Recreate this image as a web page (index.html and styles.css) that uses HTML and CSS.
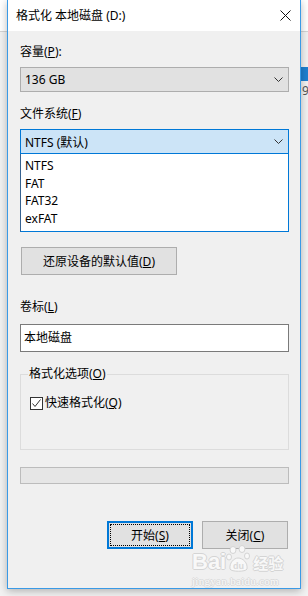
FILE: index.html
```html
<!DOCTYPE html>
<html lang="zh-CN">
<head>
    <meta charset="UTF-8">
    <meta name="viewport" content="width=device-width, initial-scale=1.0">
    <title>格式化 本地磁盘 (D:)</title>
    <link rel="stylesheet" href="styles.css">
</head>
<body>
    <div class="dialog">
        <div class="titlebar">
            <span class="title">格式化 本地磁盘 (D:)</span>
            <svg class="close" width="11" height="11" viewBox="0 0 11 11">
                <path d="M0.5 0.5 L10.5 10.5 M10.5 0.5 L0.5 10.5" stroke="#111" stroke-width="1" fill="none"/>
            </svg>
        </div>
        <div class="content">
            <div class="label">容量(<u>P</u>):</div>
            <div class="combo">
                <span>136 GB</span>
                <svg class="chevron" width="9" height="5" viewBox="0 0 9 5"><path d="M0.5 0.5 L4.5 4.5 L8.5 0.5" stroke="#333" fill="none"/></svg>
            </div>

            <div class="label label-gap">文件系统(<u>F</u>)</div>
            <div class="combo combo-open">
                <span>NTFS (默认)</span>
                <svg class="chevron" width="9" height="5" viewBox="0 0 9 5"><path d="M0.5 0.5 L4.5 4.5 L8.5 0.5" stroke="#333" fill="none"/></svg>
            </div>
            <ul class="droplist">
                <li>NTFS</li>
                <li>FAT</li>
                <li>FAT32</li>
                <li>exFAT</li>
            </ul>

            <button class="btn btn-restore">还原设备的默认值(<u>D</u>)</button>

            <div class="label label-volume">卷标(<u>L</u>)</div>
            <div class="textbox">本地磁盘</div>

            <fieldset class="options">
                <legend>格式化选项(<u>O</u>)</legend>
                <label class="check">
                    <span class="checkbox">
                        <svg width="11" height="11" viewBox="0 0 11 11"><path d="M1.5 5.5 L4 8.5 L9.5 1.5" stroke="#333" stroke-width="1" fill="none"/></svg>
                    </span>
                    <span>快速格式化(<u>Q</u>)</span>
                </label>
            </fieldset>

            <div class="progress"></div>

            <div class="actions">
                <button class="btn btn-default">开始(<u>S</u>)</button>
                <button class="btn">关闭(<u>C</u>)</button>
            </div>
        </div>

        <!-- watermark over the dialog -->
        <div class="watermark">
            <div class="wm-logo">
                <span class="wm-bai">Bai</span>
                <svg class="wm-paw" width="25" height="28" viewBox="0 0 25 28">
                    <g fill="#f8f8f8" stroke="#d4d4d4" stroke-width="1">
                        <ellipse cx="7" cy="5" rx="3" ry="3.5"/>
                        <ellipse cx="16" cy="4" rx="3" ry="3.5"/>
                        <ellipse cx="3" cy="12" rx="2.5" ry="3"/>
                        <ellipse cx="21" cy="11" rx="2.5" ry="3"/>
                        <path d="M4 24 C3 18 8 13 12 13 C17 13 22 18 21 24 C20 27 5 27 4 24 Z"/>
                    </g>
                    <text x="12.5" y="24" text-anchor="middle" font-family="Liberation Sans, sans-serif" font-weight="bold" font-size="9" fill="#d8d8d8">du</text>
                </svg>
                <span class="wm-jy">经验</span>
            </div>
            <div class="wm-url">jingyan.baidu.com</div>
        </div>
    </div>

    <div class="backdrop">
        <div class="backdrop-bar"></div>
        <div class="backdrop-text">9</div>
    </div>
</body>
</html>
```

FILE: styles.css
```css
body {
    margin: 0;
    padding-left: 7px;
    height: 596px;
    overflow: hidden;
    display: flex;
    font-family: "Noto Sans", "Noto Sans CJK SC", sans-serif;
    font-size: 12px;
    color: #000;
    background: linear-gradient(#fff 0, #fff 31px, #d4d4d4 31px, #d4d4d4 32px, #f2f2f2 32px);
}

.dialog {
    position: relative;
    z-index: 1;
    flex: none;
    width: 294px;
    height: 589px;
    box-sizing: border-box;
    border: 1px solid #3a9ae6;
    border-top: 0;
    background: #f0f0f0;
    box-shadow: 0 2px 8px rgba(0, 0, 0, 0.28);
}

.titlebar {
    height: 31px;
    box-sizing: border-box;
    padding: 0 9px 0 8px;
    display: flex;
    align-items: center;
    justify-content: space-between;
    background: #fff;
}

.title {
    line-height: 16px;
}

.content {
    padding: 13px 11px 0 12px;
}

.label {
    line-height: 16px;
}

.label-gap {
    margin-top: 14px;
}

.label-volume {
    margin-top: 24px;
}

.combo {
    margin-top: 7px;
    height: 25px;
    box-sizing: border-box;
    padding: 0 5px 0 4px;
    display: flex;
    align-items: center;
    justify-content: space-between;
    border: 1px solid #adadad;
    background: #e1e1e1;
}

.combo-open {
    border-color: #0078d7;
    background: #cce4f7;
}

.droplist {
    list-style: none;
    margin: 0;
    padding: 3px 0 4px 4px;
    background: #fff;
    border: 1px solid #0078d7;
    border-left-color: #35618f;
    border-top: 0;
}

.droplist li {
    height: 17.5px;
    line-height: 17.5px;
}

.btn {
    font: inherit;
    color: #000;
    height: 28px;
    box-sizing: border-box;
    padding: 0;
    border: 1px solid #adadad;
    background: #e1e1e1;
    cursor: default;
}

.btn-restore {
    display: block;
    width: 156px;
    margin: 15px 0 0 1px;
}

.textbox {
    margin-top: 9px;
    height: 28px;
    box-sizing: border-box;
    padding-left: 3px;
    line-height: 26px;
    border: 1px solid #7a7a7a;
    background: #fff;
}

.options {
    margin: 14px 0 0;
    min-width: 0;
    padding: 13px 9px 38px;
    border: 1px solid #dcdcdc;
}

.options legend {
    margin-left: -2px;
    padding: 0 1px;
    line-height: 16px;
}

.check {
    display: flex;
    align-items: center;
    gap: 2px;
    line-height: 16px;
}

.checkbox {
    width: 13px;
    height: 13px;
    box-sizing: border-box;
    display: flex;
    border: 1px solid #333;
    background: #fff;
}

.progress {
    margin-top: 17px;
    height: 17px;
    box-sizing: border-box;
    border: 1px solid #bcbcbc;
    background: #e6e6e6;
}

.actions {
    margin-top: 37px;
    padding-right: 1px;
    display: flex;
    justify-content: flex-end;
    gap: 9px;
}

.actions .btn {
    width: 86px;
}

.btn-default {
    position: relative;
    border: 2px solid #0078d7;
}

.btn-default::after {
    content: "";
    position: absolute;
    inset: 1px;
    border: 1px dotted #000;
}

.watermark {
    position: absolute;
    left: 184px;
    top: 545px;
    color: #f8f8f8;
    pointer-events: none;
}

.wm-logo {
    display: flex;
    align-items: flex-end;
    height: 28px;
}

.wm-bai {
    font: bold 22px/22px "Liberation Sans", sans-serif;
    text-shadow: 1px 0 #d4d4d4, -1px 0 #d4d4d4, 0 1px #d4d4d4, 0 -1px #d4d4d4;
}

.wm-jy {
    margin-left: 2px;
    font: bold 15px/20px "Noto Sans CJK SC", sans-serif;
    text-shadow: 1px 0 #d4d4d4, -1px 0 #d4d4d4, 0 1px #d4d4d4, 0 -1px #d4d4d4;
}

.wm-url {
    margin-top: 3px;
    font: 11px/11px "Liberation Serif", serif;
    letter-spacing: 0.3px;
    text-shadow: 1px 0 #dadada, -1px 0 #dadada, 0 1px #dadada, 0 -1px #dadada;
}

.backdrop {
    flex: 1;
    padding-top: 67px;
    overflow: hidden;
}

.backdrop-bar {
    height: 14px;
    background: #1f7fd0;
}

.backdrop-text {
    margin-top: 2px;
    padding-left: 1px;
    line-height: 16px;
    color: #555;
}
```
